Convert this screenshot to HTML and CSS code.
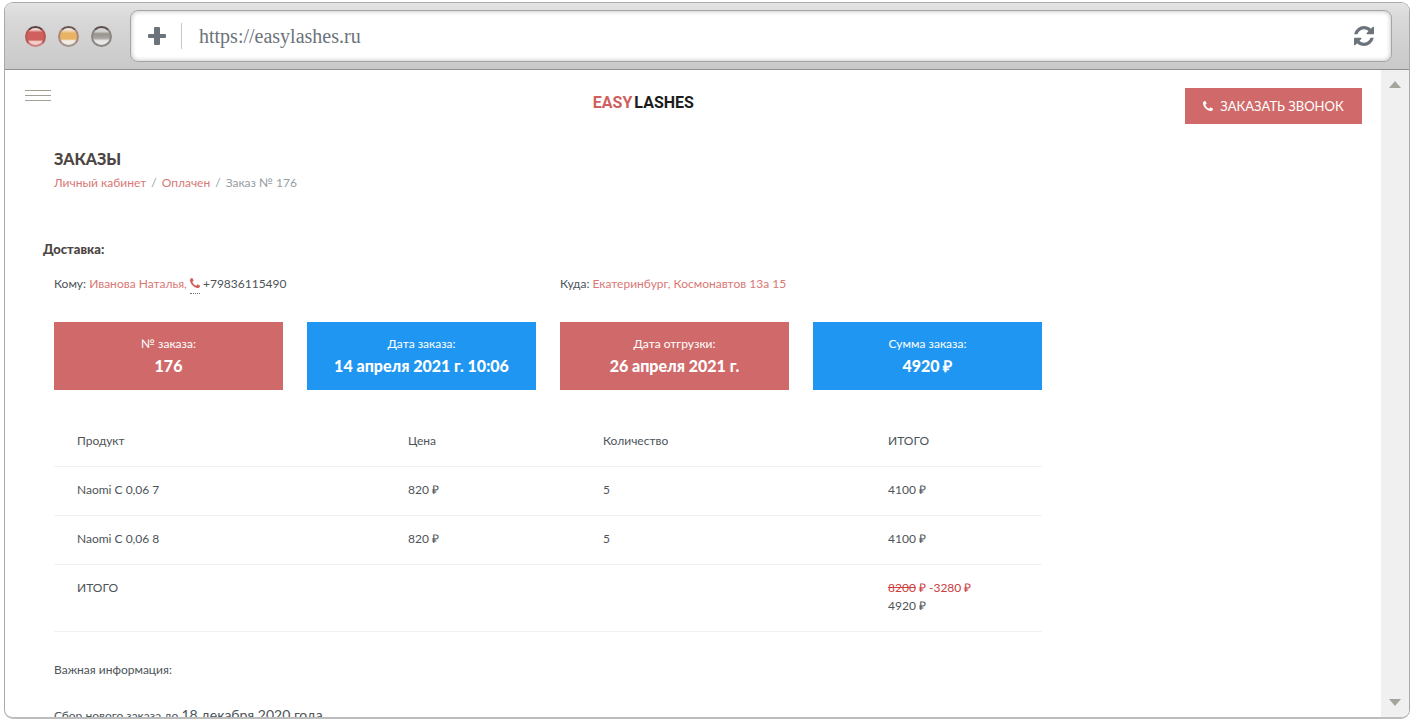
FILE: index.html
```html
<!DOCTYPE html>
<html lang="ru">

<head>
    <meta charset="UTF-8">
    <meta name="viewport" content="width=device-width, initial-scale=1.0">
    <title>Заказ № 176</title>
    <link rel="stylesheet" href="styles.css">
</head>

<body>
    <div class="browser">
        <div class="toolbar">
            <div class="lights">
                <span class="light red"></span>
                <span class="light yellow"></span>
                <span class="light grey"></span>
            </div>
            <div class="address">
                <button class="icon-btn" aria-label="Новая вкладка">
                    <svg width="18" height="18" viewBox="0 0 18 18"><path fill="#6c737a" d="M7 0h4q1 0 1 1v6h5q1 0 1 1v2q0 1-1 1h-5v6q0 1-1 1H7q-1 0-1-1v-6H1q-1 0-1-1V8q0-1 1-1h5V1q0-1 1-1z"/></svg>
                </button>
                <input type="text" class="url" value="https://easylashes.ru" aria-label="Адрес">
                <button class="icon-btn" aria-label="Обновить">
                    <svg width="20" height="20" viewBox="0 0 1536 1536"><path fill="#6c737a" d="M1511 928q0 5-1 7-64 268-268 434.500T764 1536q-146 0-282.500-55T238 1324l-129 129q-19 19-45 19t-45-19-19-45V960q0-26 19-45t45-19h448q26 0 45 19t19 45-19 45l-137 137q71 66 161 102t187 36q134 0 250-65t186-179q11-17 53-117 8-23 30-23h192q13 0 22.500 9.500t9.500 22.500zm25-800v448q0 26-19 45t-45 19h-448q-26 0-45-19t-19-45 19-45l138-138Q969 256 768 256q-134 0-250 65T332 500q-11 17-53 117-8 23-30 23H50q-13 0-22.500-9.500T18 608v-7q65-268 270-434.500T768 0q146 0 284 55.500T1297 212l130-129q19-19 45-19t45 19 19 45z"/></svg>
                </button>
            </div>
        </div>

        <div class="viewport">
            <div class="page">
                <header class="header">
                    <button class="menu-btn" aria-label="Меню">
                        <span></span>
                        <span></span>
                        <span></span>
                    </button>
                    <a href="#" class="logo"><span>EASY</span>LASHES</a>
                    <button class="call-btn">
                        <svg class="phone" viewBox="0 0 1408 1408"><path fill="currentColor" d="M1408 1112q0 27-10 70.500t-21 68.500q-21 50-122 106-94 51-186 51-27 0-53-3.500t-57.500-12.500-47-14.500T856 1357t-49-18q-98-35-175-83-127-79-264-216T152 776q-48-77-83-175-3-9-18-49t-20.500-55.500T16 449.500 3.500 392 0 339q0-92 51-186Q107 52 157 31q25-11 68.500-21T296 0q14 0 21 3 18 6 53 76 11 19 30 54t35 63.500 31 53.500q3 4 17.500 25t21.500 35.500 7 28.500q0 20-28.500 50t-62 55-62 53-28.500 46q0 9 5 22.500t8.500 20.500 14 24 11.500 19q76 137 174 235t235 174q2 1 19 11.500t24 14 20.500 8.500 22.500 5q18 0 46-28.500t53-62 55-62 50-28.500q14 0 28.500 7t35.500 21.500 25 17.500q25 15 53.500 31t63.500 35 54 30q70 35 76 53 3 7 3 21z"/></svg>
                        ЗАКАЗАТЬ ЗВОНОК
                    </button>
                </header>

                <main class="order">
                    <h1>ЗАКАЗЫ</h1>
                    <nav class="breadcrumb">
                        <a href="#">Личный кабинет</a>
                        <span>/</span>
                        <a href="#">Оплачен</a>
                        <span>/</span>
                        <span>Заказ № 176</span>
                    </nav>

                    <h2>Доставка:</h2>
                    <div class="delivery">
                        <p>Кому: <a href="#">Иванова Наталья,</a> <abbr><svg class="phone" viewBox="0 0 1408 1408"><path fill="currentColor" d="M1408 1112q0 27-10 70.500t-21 68.500q-21 50-122 106-94 51-186 51-27 0-53-3.500t-57.500-12.500-47-14.500T856 1357t-49-18q-98-35-175-83-127-79-264-216T152 776q-48-77-83-175-3-9-18-49t-20.500-55.500T16 449.500 3.500 392 0 339q0-92 51-186Q107 52 157 31q25-11 68.500-21T296 0q14 0 21 3 18 6 53 76 11 19 30 54t35 63.500 31 53.500q3 4 17.500 25t21.500 35.500 7 28.500q0 20-28.500 50t-62 55-62 53-28.500 46q0 9 5 22.500t8.500 20.500 14 24 11.500 19q76 137 174 235t235 174q2 1 19 11.500t24 14 20.500 8.500 22.500 5q18 0 46-28.500t53-62 55-62 50-28.500q14 0 28.500 7t35.500 21.500 25 17.500q25 15 53.500 31t63.500 35 54 30q70 35 76 53 3 7 3 21z"/></svg></abbr> +79836115490</p>
                        <p>Куда: <a href="#">Екатеринбург, Космонавтов 13а 15</a></p>
                    </div>

                    <div class="cards">
                        <div class="card">№ заказа:<strong>176</strong></div>
                        <div class="card blue">Дата заказа:<strong>14 апреля 2021 г. 10:06</strong></div>
                        <div class="card">Дата отгрузки:<strong>26 апреля 2021 г.</strong></div>
                        <div class="card blue">Сумма заказа:<strong>4920 ₽</strong></div>
                    </div>

                    <table class="items">
                        <thead>
                            <tr>
                                <th>Продукт</th>
                                <th class="col-price">Цена</th>
                                <th class="col-count">Количество</th>
                                <th class="col-total">ИТОГО</th>
                            </tr>
                        </thead>
                        <tbody>
                            <tr>
                                <td>Naomi C 0,06 7</td>
                                <td>820 ₽</td>
                                <td>5</td>
                                <td>4100 ₽</td>
                            </tr>
                            <tr>
                                <td>Naomi C 0,06 8</td>
                                <td>820 ₽</td>
                                <td>5</td>
                                <td>4100 ₽</td>
                            </tr>
                            <tr>
                                <td>ИТОГО</td>
                                <td></td>
                                <td></td>
                                <td><span class="discount"><s>8200</s> ₽ -3280 ₽</span><br>4920 ₽</td>
                            </tr>
                        </tbody>
                    </table>

                    <p class="info">Важная информация:</p>
                    <p class="info">Сбор нового заказа до <span class="date">18 декабря 2020 года</span></p>
                </main>
            </div>

            <div class="scrollbar">
                <span class="arrow up"></span>
                <span class="arrow down"></span>
            </div>
        </div>
    </div>
</body>

</html>
```
FILE: styles.css
```css
* {
    box-sizing: border-box;
}

body {
    height: 100vh;
    margin: 0;
    padding: 2px 3px 3px 4px;
    background: #fff;
    color: #4d5459;
    font-family: Lato, "Open Sans", sans-serif;
    font-size: 12px;
    line-height: 18px;
}

a {
    color: #d87876;
    text-decoration: none;
}

h1, h2, p {
    margin: 0;
}

button {
    padding: 0;
    border: none;
    background: none;
    font-family: inherit;
    cursor: pointer;
}

/* Browser frame */
.browser {
    display: flex;
    flex-direction: column;
    height: 100%;
    border: 1px solid #a9a9a9;
    border-bottom: 2px solid #bdbdbd;
    border-radius: 9px;
    overflow: hidden;
}

.toolbar {
    display: flex;
    align-items: center;
    gap: 18px;
    padding: 7px 17px 7px 20px;
    border-bottom: 1px solid #8f8f8d;
    background: linear-gradient(#e4e2e2, #d8d8d8 25%, #c9c9c9);
}

.lights {
    display: flex;
    gap: 12px;
}

.light {
    width: 21px;
    height: 21px;
    border: 2px solid #8c8583;
    border-top-color: #5a4c49;
    border-radius: 50%;
}

.red {
    border-color: #5a4341 #b75553 #d07f7c;
    background: linear-gradient(#f3d5d3 10%, #d0605e 25%, #d0605e 70%, #f0cfcc 80%);
}

.yellow {
    border-color: #6b5552 #a8877c #a09690;
    background: linear-gradient(#f0e6dc 10%, #e8b464 30%, #e8b464 65%, #f3ebe6 75%);
}

.grey {
    background: linear-gradient(#d2d2d0 20%, #94948c 35%, #a8a4a0 60%, #e8e8e8 75%);
}

.address {
    display: flex;
    flex: 1;
    align-items: center;
    height: 52px;
    padding: 0 17px;
    border: 1px solid #a4a4a4;
    border-radius: 8px;
    background: #fff;
    box-shadow: inset 0 0 5px #bbb;
}

.icon-btn {
    display: flex;
}

.url {
    flex: 1;
    height: 26px;
    margin-left: 15px;
    padding: 0 17px;
    border: none;
    border-left: 1px solid #c8c8c8;
    outline: none;
    background: none;
    color: #6c737a;
    font-family: "Liberation Serif", serif;
    font-size: 20px;
}

.viewport {
    display: flex;
    flex: 1;
    min-height: 0;
}

.page {
    flex: 1;
    overflow: hidden;
}

.scrollbar {
    display: flex;
    flex-direction: column;
    justify-content: space-between;
    align-items: center;
    width: 28px;
    padding: 11px 0;
    background: #f0f0f0;
}

.arrow {
    border: 6px solid transparent;
}

.up {
    border-top: none;
    border-bottom: 7px solid #a5a59c;
}

.down {
    border-bottom: none;
    border-top: 7px solid #a5a59c;
}

/* Site header */
.header {
    display: grid;
    grid-template-columns: 17fr auto 20fr;
    align-items: start;
    padding: 18px 19px 0 20px;
}

.menu-btn {
    display: flex;
    flex-direction: column;
    gap: 4px;
    width: 26px;
    padding-top: 2px;
}

.menu-btn span {
    width: 100%;
    height: 1px;
    background: #a5a096;
}

.logo {
    color: #1c1c1c;
    font-family: Roboto, "Liberation Sans", sans-serif;
    font-size: 16px;
    font-weight: bold;
    line-height: 30px;
}

.logo span {
    margin-right: 2px;
    color: #d0605e;
}

.call-btn {
    display: flex;
    justify-content: center;
    justify-self: end;
    align-items: center;
    gap: 7px;
    width: 177px;
    height: 36px;
    background: #d06a6a;
    color: #fff;
    font-size: 13px;
}

.phone {
    width: 10px;
    height: 10px;
}

/* Order */
.order {
    max-width: 1037px;
    padding: 25px 0 0 49px;
}

h1 {
    color: #4d4543;
    font-size: 16px;
    font-weight: 900;
    line-height: 20px;
}

.breadcrumb {
    display: flex;
    gap: 5px;
    margin-top: 5px;
    color: #949da5;
}

h2 {
    margin: 48px 0 0 -11px;
    color: #4d4543;
    font-size: 13px;
    font-weight: 900;
}

.delivery {
    display: grid;
    grid-template-columns: 1fr 1fr;
    gap: 24px;
    margin: 17px 0 29px;
}

abbr {
    padding-bottom: 2px;
    border-bottom: 1px dotted #6c737a;
    color: #d0605e;
}

.cards {
    display: grid;
    grid-template-columns: repeat(4, 1fr);
    gap: 24px;
}

.card {
    padding: 13px 0 12px;
    background: #d06a6a;
    color: #fff;
    text-align: center;
}

.card strong {
    display: block;
    font-size: 16px;
    font-weight: 900;
    line-height: 25px;
}

.blue {
    background: #1e96f2;
}

.items {
    width: 100%;
    margin: 28px 0 29px;
    border-collapse: collapse;
    table-layout: fixed;
}

.items th,
.items td {
    padding: 14px 0 16px 23px;
    border-bottom: 1px solid #f0f0f3;
    font-weight: normal;
    text-align: left;
    vertical-align: top;
}

.col-price {
    width: 195px;
}

.col-count {
    width: 285px;
}

.col-total {
    width: 177px;
}

.discount {
    color: #cc4040;
}

.info {
    margin-bottom: 27px;
}

.date {
    font-size: 14px;
}
```
